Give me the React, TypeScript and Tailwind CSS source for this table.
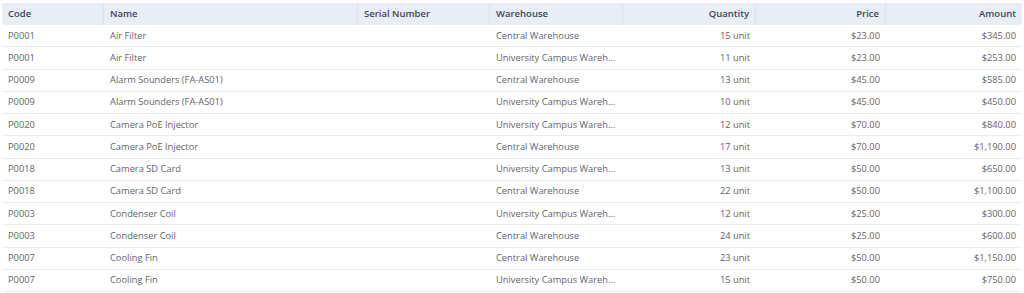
import React from 'react';

type Row = { code: string; name: string; serial: string; warehouse: string; qty: number; price: string; amount: string };

const rows: Row[] = [
  { code: 'P0001', name: 'Air Filter', serial: '', warehouse: 'Central Warehouse', qty: 15, price: '$23.00', amount: '$345.00' },
  { code: 'P0001', name: 'Air Filter', serial: '', warehouse: 'University Campus Warehouse', qty: 11, price: '$23.00', amount: '$253.00' },
  { code: 'P0009', name: 'Alarm Sounders (FA-AS01)', serial: '', warehouse: 'Central Warehouse', qty: 13, price: '$45.00', amount: '$585.00' },
  { code: 'P0009', name: 'Alarm Sounders (FA-AS01)', serial: '', warehouse: 'University Campus Warehouse', qty: 10, price: '$45.00', amount: '$450.00' },
  { code: 'P0020', name: 'Camera PoE Injector', serial: '', warehouse: 'University Campus Warehouse', qty: 12, price: '$70.00', amount: '$840.00' },
  { code: 'P0020', name: 'Camera PoE Injector', serial: '', warehouse: 'Central Warehouse', qty: 17, price: '$70.00', amount: '$1,190.00' },
  { code: 'P0018', name: 'Camera SD Card', serial: '', warehouse: 'University Campus Warehouse', qty: 13, price: '$50.00', amount: '$650.00' },
  { code: 'P0018', name: 'Camera SD Card', serial: '', warehouse: 'Central Warehouse', qty: 22, price: '$50.00', amount: '$1,100.00' },
  { code: 'P0003', name: 'Condenser Coil', serial: '', warehouse: 'University Campus Warehouse', qty: 12, price: '$25.00', amount: '$300.00' },
  { code: 'P0003', name: 'Condenser Coil', serial: '', warehouse: 'Central Warehouse', qty: 24, price: '$25.00', amount: '$600.00' },
  { code: 'P0007', name: 'Cooling Fin', serial: '', warehouse: 'Central Warehouse', qty: 23, price: '$50.00', amount: '$1,150.00' },
  { code: 'P0007', name: 'Cooling Fin', serial: '', warehouse: 'University Campus Warehouse', qty: 15, price: '$50.00', amount: '$750.00' },
];

const cols = 'grid grid-cols-[102px_254px_132px_133px_133px_130px_136px]';

export default function App() {
  return (
    <div className="w-[1024px] h-[293px] bg-white pt-[3px] px-[2px] overflow-hidden" style={{ fontFamily: '"Open Sans", sans-serif' }}>
      {/* Header */}
      <div className={`${cols} h-[22px] bg-[#e9eef6] text-[#3f4650] font-semibold text-[9.5px]`}>
        <div className="px-[6px] flex items-center border-r border-[#dde3ec]">Code</div>
        <div className="px-[6px] flex items-center border-r border-[#dde3ec]">Name</div>
        <div className="px-[6px] flex items-center border-r border-[#dde3ec]">Serial Number</div>
        <div className="px-[6px] flex items-center border-r border-[#dde3ec]">Warehouse</div>
        <div className="px-[6px] flex items-center justify-end border-r border-[#dde3ec]">Quantity</div>
        <div className="px-[6px] flex items-center justify-end border-r border-[#dde3ec]">Price</div>
        <div className="px-[6px] flex items-center justify-end">Amount</div>
      </div>

      {/* Body */}
      {rows.map((r, i) => (
        <div key={i} className={`${cols} h-[22.25px] border-b border-[#ececec] text-[#5f646b] text-[9.3px]`}>
          <div className="px-[6px] flex items-center">{r.code}</div>
          <div className="px-[6px] flex items-center">{r.name}</div>
          <div className="px-[6px] flex items-center">{r.serial}</div>
          <div className="px-[6px] flex items-center min-w-0">
            <span className="truncate">{r.warehouse}</span>
          </div>
          <div className="px-[6px] flex items-center justify-end">{r.qty} unit</div>
          <div className="px-[6px] flex items-center justify-end">{r.price}</div>
          <div className="px-[6px] flex items-center justify-end">{r.amount}</div>
        </div>
      ))}
    </div>
  );
}
